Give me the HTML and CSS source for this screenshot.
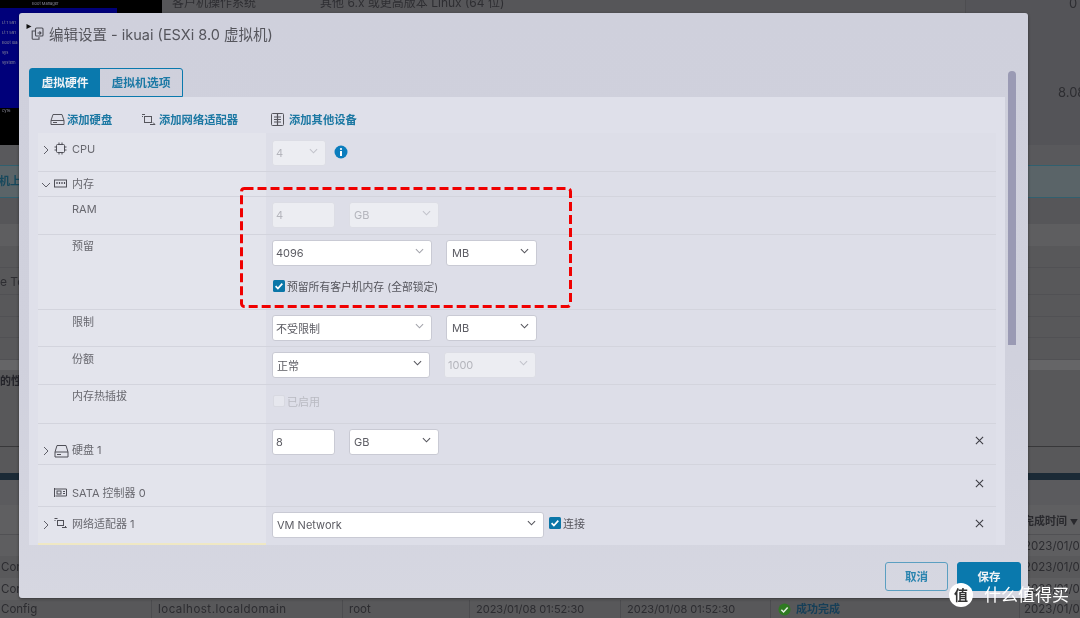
FILE: index.html
```html
<!DOCTYPE html>
<html lang="zh-CN">
<head>
<meta charset="utf-8">
<title>编辑设置 - ikuai</title>
<link rel="stylesheet" href="styles.css">
</head>
<body>
<div class="page">
  <div class="backdrop">
    <div class="b-top">
      <div class="console">
        <div class="console-black"><span>Boot Manager</span></div>
        <div class="console-blue"><span>Lt 1 591</span><span>Lt 1 591</span><span>Boot loa</span><span>sys</span><span>system</span></div>
        <div class="console-foot">cy16</div>
      </div>
      <div class="b-top-mid"><span class="faint">客户机操作系统</span><span class="faint">其他 6.x 或更高版本 Linux (64 位)</span></div>
      <div class="b-chart"><span class="chart-0">0</span><span class="chart-8">8.08</span></div>
    </div>
    <div class="b-gap1"></div>
    <div class="b-notice">机上</div>
    <div class="b-gap2"></div>
    <div class="b-head1"></div>
    <div class="b-rows"><div class="b-line"></div><div class="b-line e-to">e To</div><div class="b-line"></div><div class="b-line"></div><div class="b-line"></div></div>
    <div class="b-head2"></div>
    <div class="b-perf">的性</div>
    <div class="b-perf2"></div>
    <div class="b-navy"></div>
    <div class="b-gap3"></div>
    <div class="b-thead"><span>完成时间 <small class="sort">▼</small></span></div>
    <div class="b-tr alt first"><span></span><span></span><span></span><span></span><span></span><span></span><span>2023/01/08</span></div>
    <div class="b-tr"><span>Config</span><span></span><span></span><span></span><span></span><span></span><span>2023/01/08</span></div>
    <div class="b-tr alt"><span>Config</span><span></span><span></span><span></span><span></span><span></span><span>2023/01/08</span></div>
    <div class="b-tr last"><span>Config</span><span class="host">localhost.localdomain</span><span>root</span><span class="date">2023/01/08 01:52:30</span><span class="date">2023/01/08 01:52:30</span><span class="ok"><svg class="ok-ic" viewBox="0 0 14 14"><circle cx="7" cy="7" r="6.5" fill="#2f7a22"/><path d="M3.6 7.2l2.4 2.4 4.4-4.8" fill="none" stroke="#e8efe6" stroke-width="1.6"/></svg>成功完成</span><span>2023/01/08</span></div>
  </div>

  <section class="dialog">
    <svg class="cursor" viewBox="0 0 6 6"><path d="M0 0l6 3-6 3z" fill="#111"/></svg>
    <header class="dlg-head">
      <svg class="dlg-ic" viewBox="0 0 13 13" fill="none" stroke="#4d4d55" stroke-width="1.1"><rect x="4.5" y="1" width="7.5" height="8" rx="1"/><path d="M4 4H1.2v7.6a.6.6 0 0 0 .6.6H8V10"/><path d="M6.5 6h3.5M8.5 4.4L10 6 8.5 7.6"/></svg>
      <h1 class="dlg-title">编辑设置 - ikuai (ESXi 8.0 虚拟机)</h1>
    </header>
    <nav class="tabs"><div class="tab on">虚拟硬件</div><div class="tab">虚拟机选项</div></nav>
    <div class="body">
      <div class="panel">
        <div class="toolbar">
          <div class="tool t1"><svg class="t-ic" viewBox="0 0 15 13" fill="none" stroke="#55555c"><path d="M1 7.5L3 1.5h9l2 6v4H1zM1 7.5h13M3 9.5h4"/></svg><span>添加硬盘</span></div>
          <div class="tool t2"><svg class="t-ic" viewBox="0 0 15 13" fill="none" stroke="#55555c"><rect x="3.5" y="3.5" width="7" height="6"/><path d="M1 1.5h3M1 3.5h1M9 11.5h5M12 9.5l2 2"/></svg><span>添加网络适配器</span></div>
          <div class="tool t3"><svg class="t-ic t-ic3" viewBox="0 0 13 13" fill="none" stroke="#55555c"><rect x=".5" y=".5" width="12" height="12" rx="1"/><path d="M6.5 1v11M3 4h7M3 6.5h7M3 9h7" stroke-width="1.2"/></svg><span>添加其他设备</span></div>
        </div>
        <div class="table">
          <div class="row r-cpu">
            <div class="lbl"><svg class="chev" viewBox="0 0 10 12"><path d="M3 2l4 4-4 4" fill="none" stroke="#5f5f68"/></svg><svg class="ic" viewBox="0 0 13 13" fill="none" stroke="#4f4f57"><rect x="2.5" y="2.5" width="8" height="8" rx="1"/><path d="M5 .5v2M8 .5v2M5 10.5v2M8 10.5v2M.5 5h2M.5 8h2M10.5 5h2M10.5 8h2"/></svg><span>CPU</span></div>
            <div class="val"><div class="field dis w54"><span>4</span><svg class="sel" viewBox="0 0 10 6"><path d="M1 1l4 4 4-4"/></svg></div><svg class="info" viewBox="0 0 14 14"><circle cx="7" cy="7" r="6.5" fill="#0b7dbd"/><rect x="6" y="6" width="2" height="5" fill="#fff"/><circle cx="7" cy="4" r="1.1" fill="#fff"/></svg></div>
          </div>
          <div class="row r-mem">
            <div class="lbl"><svg class="chev" viewBox="0 0 10 12"><path d="M1 4l4 4 4-4" fill="none" stroke="#5f5f68"/></svg><svg class="ic" viewBox="0 0 13 13" fill="none" stroke="#4f4f57"><rect x=".5" y="3" width="12" height="7"/><path d="M3 5v2M5.5 5v2M8 5v2M10.5 5v2" stroke-width="1.2"/></svg><span>内存</span></div>
            <div class="val"></div>
          </div>
          <div class="row r-std">
            <div class="lbl sub"><span>RAM</span></div>
            <div class="val"><div class="field dis w63"><span>4</span></div><div class="field dis w90"><span>GB</span><svg class="sel" viewBox="0 0 10 6"><path d="M1 1l4 4 4-4"/></svg></div></div>
          </div>
          <div class="row r-res">
            <div class="lbl sub"><span>预留</span></div>
            <div class="val val-col">
              <div class="val-line"><div class="field w160"><span>4096</span><svg class="sel lite" viewBox="0 0 10 6"><path d="M1 1l4 4 4-4"/></svg></div><div class="field w91"><span>MB</span><svg class="sel dark" viewBox="0 0 10 6"><path d="M1 1l4 4 4-4"/></svg></div></div>
              <div class="check"><svg class="cb" viewBox="0 0 12 12"><rect width="12" height="12" rx="1.5" fill="#0a76a8"/><path d="M2.6 6.2l2.3 2.4 4.4-5" fill="none" stroke="#fff" stroke-width="1.7"/></svg><span>预留所有客户机内存 (全部锁定)</span></div>
            </div>
          </div>
          <div class="row r-lim">
            <div class="lbl sub"><span>限制</span></div>
            <div class="val"><div class="field w160"><span>不受限制</span><svg class="sel lite" viewBox="0 0 10 6"><path d="M1 1l4 4 4-4"/></svg></div><div class="field w91"><span>MB</span><svg class="sel dark" viewBox="0 0 10 6"><path d="M1 1l4 4 4-4"/></svg></div></div>
          </div>
          <div class="row r-std r-share">
            <div class="lbl sub"><span>份额</span></div>
            <div class="val"><div class="field w158"><span>正常</span><svg class="sel dark" viewBox="0 0 10 6"><path d="M1 1l4 4 4-4"/></svg></div><div class="field dis w92"><span>1000</span><svg class="sel" viewBox="0 0 10 6"><path d="M1 1l4 4 4-4"/></svg></div></div>
          </div>
          <div class="row r-hot">
            <div class="lbl sub"><span>内存热插拔</span></div>
            <div class="val"><div class="check off"><span class="cb-off"></span><span>已启用</span></div></div>
          </div>
          <div class="row r-disk">
            <div class="lbl"><svg class="chev" viewBox="0 0 10 12"><path d="M3 2l4 4-4 4" fill="none" stroke="#5f5f68"/></svg><svg class="ic ic-w" viewBox="0 0 15 14" fill="none" stroke="#4f4f57"><path d="M1 8L3 1.5h9L14 8v5H1zM1 8h13M3 10.5h4"/></svg><span>硬盘 1</span></div>
            <div class="val"><div class="field w63"><span>8</span></div><div class="field w90"><span>GB</span><svg class="sel dark" viewBox="0 0 10 6"><path d="M1 1l4 4 4-4"/></svg></div><svg class="x" viewBox="0 0 10 10"><path d="M1 1l8 8M9 1l-8 8"/></svg></div>
          </div>
          <div class="row r-sata">
            <div class="lbl sub-ic"><svg class="ic" viewBox="0 0 13 13" fill="none" stroke="#4f4f57"><path d="M.5 2v9M.5 3h12v7H1.5"/><rect x="3" y="5" width="4" height="3"/><path d="M9 5.5h2M9 7.5h2"/></svg><span>SATA 控制器 0</span></div>
            <div class="val"><svg class="x x-top" viewBox="0 0 10 10"><path d="M1 1l8 8M9 1l-8 8"/></svg></div>
          </div>
          <div class="row r-net">
            <div class="lbl"><svg class="chev" viewBox="0 0 10 12"><path d="M3 2l4 4-4 4" fill="none" stroke="#5f5f68"/></svg><svg class="ic" viewBox="0 0 13 13" fill="none" stroke="#4f4f57"><rect x="3.5" y="3.5" width="6" height="5"/><path d="M.5 1.5h3M.5 3.5h1M8 10.5h4.5M11 9l1.5 1.5"/></svg><span>网络适配器 1</span></div>
            <div class="val"><div class="field w272"><span>VM Network</span><svg class="sel dark" viewBox="0 0 10 6"><path d="M1 1l4 4 4-4"/></svg></div><div class="check inline"><svg class="cb" viewBox="0 0 12 12"><rect width="12" height="12" rx="1.5" fill="#0a76a8"/><path d="M2.6 6.2l2.3 2.4 4.4-5" fill="none" stroke="#fff" stroke-width="1.7"/></svg><span>连接</span></div><svg class="x" viewBox="0 0 10 10"><path d="M1 1l8 8M9 1l-8 8"/></svg></div>
          </div>
        </div>
      </div>
      <div class="scroll"><div class="thumb"></div></div>
    </div>
    <footer class="dlg-foot"><button class="btn ghost">取消</button><button class="btn solid">保存</button></footer>
  </section>

  <svg class="redbox" viewBox="0 0 333 122"><rect x="1.5" y="1.5" width="329" height="118" rx="3" fill="none" stroke="#f00000" stroke-width="3" stroke-dasharray="9 4"/></svg>
  <div class="mark">
    <div class="mark-logo">值</div>
    <div class="mark-text">什么值得买</div>
  </div>
</div>
</body>
</html>
```

FILE: styles.css
```css
* { box-sizing: border-box; }
html, body { margin: 0; padding: 0; background: #575759; }
body { font-family: Inter, "Noto Sans CJK SC", sans-serif; }
.page { position: relative; width: 1080px; height: 618px; overflow: hidden; background: #575759; color: #2a2a2e; filter: blur(.45px); }

/* dimmed page behind the dialog */
.backdrop { display: flex; flex-direction: column; height: 618px; font-size: 11px; color: #2f2f33; }
.b-top { display: flex; height: 145px; }
.console { width: 162px; display: flex; flex-direction: column; background: #000; font-size: 4px; color: #8a8a9a; }
.console-black { height: 8px; padding-left: 32px; line-height: 8px; white-space: nowrap; }
.console-blue { height: 100px; width: 117px; background: #00007a; padding: 12px 0 0 2px; display: flex; flex-direction: column; gap: 5px; white-space: nowrap; }
.console-foot { padding: 0 2px; }
.b-top-mid { flex: 1; background: #565659; display: flex; gap: 64px; padding: 0 0 0 10px; font-size: 12px; color: #2e2e32; white-space: nowrap; align-items: flex-start; min-width: 0; }
.faint { margin-top: -7px; }
.b-chart { width: 115px; flex: none; border-left: 1px solid #4d4d50; background: #545458; position: relative; font-size: 13px; color: #2d2d31; }
.chart-0 { position: absolute; left: 103px; top: -5px; }
.chart-8 { position: absolute; left: 92px; top: 84px; white-space: nowrap; }
.b-gap1 { height: 20px; background: #59595c; }
.b-notice { height: 33px; background: #5a6468; border-top: 1px solid #31606f; border-bottom: 1px solid #31606f; line-height: 31px; color: #16485c; font-weight: 700; font-size: 11px; text-indent: -1px; }
.b-gap2 { height: 26px; background: #565659; }
.b-head1 { height: 22px; background: #5e5e60; }
.b-rows { height: 114px; display: flex; flex-direction: column; background: #58585a; }
.b-line { flex: 1; border-bottom: 1px solid #515154; line-height: 24px; font-size: 12px; color: #2e2e32; }
.e-to { padding-top: 2px; }
.b-head2 { height: 10px; background: #656567; }
.b-perf { height: 76px; background: #58585a; line-height: 22px; font-weight: 700; color: #24242a; }
.b-perf2 { height: 27px; background: #58585a; border-top: 1px solid #38383a; }
.b-navy { height: 7px; background: #1b2a36; }
.b-gap3 { height: 25px; background: #5b5b5e; }
.b-thead { height: 30px; background: #5f5f61; display: flex; justify-content: flex-end; align-items: center; padding-right: 2px; border-bottom: 1px solid #515154; font-size: 11px; font-weight: 700; color: #29292d; white-space: nowrap; }
.sort { font-size: 8px; }
.b-tr { height: 22px; display: grid; grid-template-columns: 152px 191px 127px 151px 150px 249px 60px; align-items: center; background: #59595b; font-size: 11.5px; color: #2c2c30; white-space: nowrap; }
.b-tr.alt { background: #5e5e60; }
.b-tr.first { height: 21px; }
.b-tr.last { height: 18px; background: #58585a; }
.b-tr span { padding-left: 1px; border-right: 1px solid transparent; overflow: hidden; }
.b-tr.last span { border-right-color: #4c4c4f; line-height: 18px; }
.b-tr span:nth-child(2), .b-tr span:nth-child(3), .b-tr span:nth-child(4), .b-tr span:nth-child(5), .b-tr span:nth-child(6) { padding-left: 6px; }
.b-tr span:last-child { padding-left: 4px; border: 0; overflow: visible; }
.b-tr .host { letter-spacing: .5px; }
.b-tr .date { font-size: 11px; padding-left: 4px; }
.ok { display: flex; align-items: center; gap: 5px; color: #163f58; font-weight: 700; font-size: 11px; }
.ok-ic { width: 13px; height: 13px; margin-left: 1px; }

/* dialog */
.dialog { position: absolute; left: 19px; top: 13px; width: 1009px; height: 585px; border-radius: 3px; background: linear-gradient(#cfd0dc, #d0d1dd 60%, #d6d7e1); box-shadow: 0 1px 3px rgba(0,0,0,.45); display: flex; flex-direction: column; }
.cursor { position: absolute; left: 7px; top: 11px; width: 6px; height: 5px; }
.dlg-head { height: 42px; padding: 14px 0 0 12px; display: flex; align-items: flex-start; }
.dlg-ic { width: 13px; height: 13px; flex: none; }
.dlg-title { margin: -1px 0 0 5px; font-size: 14.5px; line-height: 17px; font-weight: 400; color: #55555c; white-space: nowrap; }
.tabs { display: flex; margin: 13px 0 0 10px; width: 154px; height: 29px; border: 1px solid #0a79ad; border-radius: 3px 3px 0 0; flex: none; }
.tab { display: flex; align-items: center; justify-content: center; font-size: 11.8px; font-weight: 700; color: #1c79a5; flex: 1; padding-bottom: 2px; }
.tab.on { flex: none; width: 70px; background: #0a79ad; color: #f0f3f6; }
.body { display: flex; flex: none; height: 448px; margin-left: 10px; position: relative; }
.panel { width: 976px; height: 448px; background: #dfe0ea; padding: 0 9px; display: flex; flex-direction: column; }
.toolbar { height: 36px; padding-top: 8px; display: flex; align-items: center; font-size: 11.3px; font-weight: 700; color: #1c78a3; white-space: nowrap; flex: none; }
.tool { display: flex; align-items: center; }
.t-ic { width: 15px; height: 13px; margin-right: 2px; flex: none; }
.t1 { margin-left: 12px; width: 91px; }
.t2 { width: 129px; }
.t2 .t-ic { margin-right: 3px; }
.t3 .t-ic3 { margin-right: 4px; }
.table { width: 958px; display: flex; flex-direction: column; flex: none; }
.row { display: grid; grid-template-columns: 228px 1fr; border-bottom: 1px solid #d3d4dd; }
.r-cpu { height: 39px; }
.r-mem { height: 25px; }
.r-std { height: 38px; }
.r-lim { height: 37px; }
.r-res { height: 75px; }
.r-hot { height: 39px; }
.r-disk { height: 41px; }
.r-sata { height: 42px; }
.r-net { height: 38px; border-bottom: 0; }
.lbl { background: #e3e4ec; display: flex; align-items: flex-start; padding: 8px 0 0 3px; font-size: 11px; line-height: 14px; color: #68686f; white-space: nowrap; }
.r-net .lbl { border-bottom: 2px solid #efe8c4; }
.lbl.sub { padding-left: 34px; padding-top: 5px; }
.r-res .lbl.sub, .r-hot .lbl.sub { padding-top: 4px; }
.lbl.sub-ic { padding: 21px 0 0 16px; }
.r-cpu .lbl { padding-top: 9px; }
.r-mem .lbl { padding-top: 5px; }
.r-disk .lbl { padding-top: 19px; }
.r-net .lbl { padding-top: 10px; }
.chev { width: 10px; height: 14px; flex: none; }
.chev path { transform: translateY(1px); }
.ic { width: 13px; height: 13px; margin: 0 5px 0 3px; flex: none; }
.ic-w { width: 15px; height: 14px; margin: 1px 3px 0 3px; }
.lbl.sub-ic .ic { margin-left: 0; }
.val { background: #dddee8; display: flex; align-items: flex-start; padding: 5px 12px 0 6px; gap: 14px; min-width: 0; }
.r-cpu .val { padding-top: 7px; }
.val-col { flex-direction: column; gap: 12px; }
.val-line { display: flex; gap: 14px; }
.r-disk .x, .r-net .x { margin-top: 7px; }
.field { height: 26px; background: #fff; border: 1px solid #c9cad4; border-radius: 3px; display: flex; align-items: center; justify-content: space-between; padding: 0 7px 0 3px; font-size: 11px; color: #5c5c63; flex: none; white-space: nowrap; }
.field.dis { background: #ecedf2; border-color: #dcdde5; color: #b4b5bc; }
.w54 { width: 54px; }
.w63 { width: 63px; }
.w90 { width: 90px; padding-left: 4px; }
.w91 { width: 91px; padding-left: 5px; }
.w92 { width: 92px; padding-left: 3px; }
.w158 { width: 158px; padding-left: 4px; }
.w160 { width: 160px; }
.w272 { width: 272px; padding-left: 4px; }
.sel { width: 9px; height: 6px; fill: none; stroke: #c2c3cb; stroke-width: 1.2; flex: none; margin-top: -4px; }
.sel.lite { stroke: #a2a3ab; }
.sel.dark { stroke: #55555c; }
.info { width: 14px; height: 14px; margin: 5px 0 0 -6px; flex: none; }
.check { display: flex; align-items: center; font-size: 10.8px; color: #55555c; white-space: nowrap; padding-left: 1px; }
.cb { width: 12px; height: 12px; margin-right: 2px; flex: none; }
.check.off { color: #b9bac2; margin-top: 3px; font-size: 11px; }
.cb-off { width: 12px; height: 12px; background: #e6e7ee; border: 1px solid #d8d9e1; border-radius: 2px; margin-right: 2px; flex: none; }
.check.inline { margin: 0 0 0 -10px; height: 22px; font-size: 11px; }
.x { width: 9px; height: 9px; margin-left: auto; flex: none; stroke: #3d3d44; stroke-width: 1.2; fill: none; }
.x-top { margin-top: 14px; }
.r-sata .val { padding-top: 0; }
.scroll { position: absolute; left: 979px; top: -26px; width: 8px; height: 274px; }
.thumb { height: 100%; background: #9a9ab4; border-radius: 4px 4px 0 0; }
.dlg-foot { display: flex; justify-content: flex-end; gap: 9px; padding: 17px 7px 0 0; }
.btn { height: 29px; width: 64px; padding: 0 0 2px; border-radius: 3px; font: 700 11.5px Inter, "Noto Sans CJK SC", sans-serif; }
.ghost { background: transparent; border: 1px solid #5b9fc1; color: #2a84af; width: 63px; }
.solid { background: #0a79ad; border: 1px solid #0a79ad; color: #eef2f5; }

/* annotation and watermark over the screenshot */
.redbox { position: absolute; left: 240px; top: 187px; width: 333px; height: 122px; }
.mark { position: absolute; left: 949px; top: 583px; display: flex; align-items: center; gap: 11px; }
.mark-logo { width: 24px; height: 24px; border-radius: 50%; background: #fff; color: #333; font-size: 14px; line-height: 24px; text-align: center; font-weight: 700; }
.mark-text { font-size: 17px; color: #fff; white-space: nowrap; line-height: 24px; }
```
